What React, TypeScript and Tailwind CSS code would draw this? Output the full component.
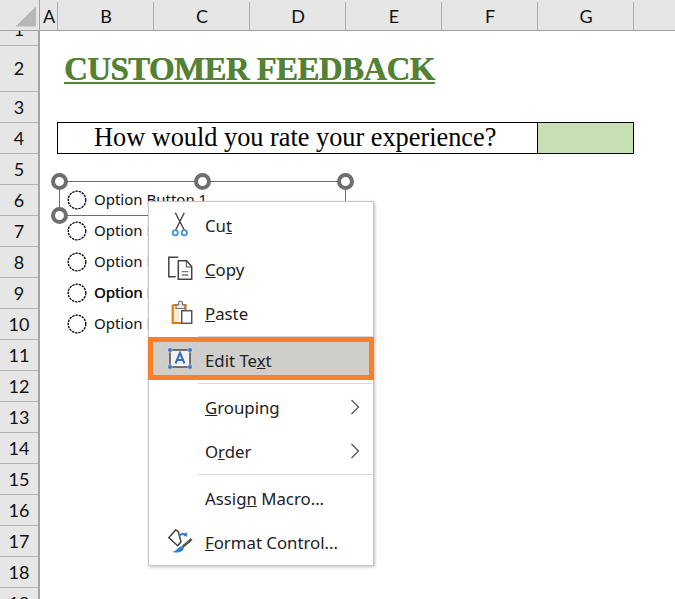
const columns = [
  { label: "A", width: "w-[18px]" },
  { label: "B", width: "w-[96px]" },
  { label: "C", width: "w-[96px]" },
  { label: "D", width: "w-[96px]" },
  { label: "E", width: "w-[96px]" },
  { label: "F", width: "w-[96px]" },
  { label: "G", width: "w-[96px]" },
];

const rows = [
  { label: "2", height: "h-[46px]" },
  { label: "3", height: "h-[31px]" },
  { label: "4", height: "h-[31px]" },
  { label: "5", height: "h-[31px]" },
  { label: "6", height: "h-[31px]" },
  { label: "7", height: "h-[31px]" },
  { label: "8", height: "h-[31px]" },
  { label: "9", height: "h-[31px]" },
  { label: "10", height: "h-[31px]" },
  { label: "11", height: "h-[31px]" },
  { label: "12", height: "h-[31px]" },
  { label: "13", height: "h-[31px]" },
  { label: "14", height: "h-[31px]" },
  { label: "15", height: "h-[31px]" },
  { label: "16", height: "h-[31px]" },
  { label: "17", height: "h-[31px]" },
  { label: "18", height: "h-[31px]" },
  { label: "19", height: "h-[31px]" },
];

const options = [
  { label: "Option Button 1", bold: false },
  { label: "Option Button 2", bold: false },
  { label: "Option Button 3", bold: false },
  { label: "Option Button 4", bold: true },
  { label: "Option Button 5", bold: false },
];

const RadioCircle = () => (
  <svg width="20" height="20" viewBox="0 0 20 20" className="shrink-0">
    <circle cx="10" cy="10" r="8.8" fill="white" stroke="#000" strokeWidth="1.3" strokeDasharray="2.4 0.9" />
  </svg>
);

const Handle = ({ className }: { className: string }) => (
  <div className={`absolute w-[17px] h-[17px] rounded-full bg-white border-[4px] border-[#6e6e6e] ${className}`} />
);

const CutIcon = () => (
  <svg width="32" height="32" viewBox="0 0 32 32" fill="none">
    <path d="M7.3 0.7 L16.3 18 M16.3 0.7 L7.7 18" stroke="#444" strokeWidth="1.4" />
    <circle cx="7.3" cy="20.7" r="2.6" stroke="#3f97dc" strokeWidth="1.8" />
    <circle cx="16.3" cy="20.7" r="2.6" stroke="#3f97dc" strokeWidth="1.8" />
  </svg>
);

const CopyIcon = () => (
  <svg width="32" height="32" viewBox="0 0 32 32" fill="none">
    <path d="M10.3 1.2 H0.8 V20.7 H7.7" stroke="#444" strokeWidth="1.5" />
    <path d="M10.3 4.7 H18.7 L23.7 10.7 V23.3 H10.3 Z" fill="white" stroke="#444" strokeWidth="1.5" />
    <path d="M18.3 5 V11 H23.5" stroke="#444" strokeWidth="1" />
    <path d="M13.7 15.7 H20.3 M13.7 19 H20.3" stroke="#777" strokeWidth="1.3" />
  </svg>
);

const PasteIcon = () => (
  <svg width="32" height="32" viewBox="0 0 32 32" fill="none">
    <path d="M4.7 5 H17.5 V10 M4.7 5 V23 H13" stroke="#e07b12" strokeWidth="2.2" />
    <path d="M6 6.5 H16 V9 H11 V21.5 H6 Z" fill="#fbe9d3" />
    <path d="M8 8.5 V5 H10.5 V2.7 C10.5 0.5 14.5 0.5 14.5 2.7 V5 H17 V8.5 Z" fill="#e8e8e8" stroke="#777" strokeWidth="1.2" />
    <rect x="13.7" y="10.7" width="10" height="12.6" fill="white" stroke="#555" strokeWidth="1.5" />
  </svg>
);

const EditTextIcon = () => (
  <svg width="32" height="32" viewBox="0 0 32 32" fill="none">
    <rect x="6" y="6" width="20" height="17" fill="#f2f2f2" stroke="#333" strokeWidth="1.3" />
    <path d="M11.5 19.5 L16 8.8 L20.5 19.5 M13 16 H19" stroke="#2f6fc4" strokeWidth="2" />
    <g fill="#2f6fc4" stroke="#cfe2f7" strokeWidth="0.6">
      <rect x="4" y="4" width="4" height="4" />
      <rect x="24" y="4" width="4" height="4" />
      <rect x="4" y="21" width="4" height="4" />
      <rect x="24" y="21" width="4" height="4" />
    </g>
  </svg>
);

const FormatIcon = () => (
  <svg width="32" height="32" viewBox="0 0 32 32" fill="none">
    <path d="M0.8 8.7 L7.7 0.9 L10.3 2.7 L13 12.7 L9.7 16.7 Z" fill="white" stroke="#444" strokeWidth="1.5" />
    <path d="M11.5 7 C13.5 4 16 4 17.5 7" stroke="#2f7fd0" strokeWidth="1.8" />
    <path d="M15 5 L19 3.5 L19 8 Z" fill="#2f7fd0" />
    <path d="M23.7 10 L14.5 18" stroke="#555" strokeWidth="2.6" />
    <path d="M4.3 22.7 C8.5 22.5 9 18.5 13.5 17.2 L15.8 19.6 C15 23 9 24.8 4.3 22.7 Z" fill="#2f7fd0" />
  </svg>
);

const Chevron = () => (
  <svg width="10" height="16" viewBox="0 0 10 16" fill="none" className="mr-[13px] -mt-[2px]">
    <path d="M1.5 1 L8.5 8 L1.5 15" stroke="#555" strokeWidth="1.3" />
  </svg>
);

const MenuItem = ({
  icon,
  children,
  arrow,
}: {
  icon?: React.ReactNode;
  children: React.ReactNode;
  arrow?: boolean;
}) => (
  <div className="flex items-center h-[44px] text-[#222]">
    <div className="w-[19px] shrink-0" />
    <div className="w-[32px] h-[32px] shrink-0 translate-y-[2px]">{icon}</div>
    <div className="ml-[5px] flex-1">{children}</div>
    {arrow && <Chevron />}
  </div>
);

const Separator = () => <div className="ml-[49px] h-px bg-[#d9d9d9]" />;

export default function App() {
  return (
    <div className="w-[675px] h-[599px] overflow-hidden bg-white flex flex-col font-['Lato',sans-serif] text-[#111]">
      {/* column headers */}
      <div className="flex h-[31px] shrink-0 bg-[#e6e6e6] border-b border-[#a3a3a3]">
        <div className="w-[40px] shrink-0 border-r border-[#a3a3a3] pt-[6px] pl-[15px]">
          <svg width="22" height="21" viewBox="0 0 22 21">
            <path d="M21 0.5 V20.5 H0.5 Z" fill="#b7b7b7" />
          </svg>
        </div>
        {columns.map((c) => (
          <div key={c.label} className={`${c.width} shrink-0 mt-[2px] pl-px flex items-center justify-center border-r border-[#adadad] text-[18px]`}>
            {c.label}
          </div>
        ))}
      </div>

      <div className="flex flex-1 min-h-0">
        {/* row headers */}
        <div className="w-[40px] shrink-0 bg-[#e6e6e6] border-r-2 border-[#a3a3a3] text-[18px]">
          <div className="h-[15px] overflow-hidden border-b border-[#b3b3b3]">
            <div className="h-[31px] -mt-[17px] flex items-center justify-center">1</div>
          </div>
          {rows.map((r) => (
            <div key={r.label} className={`${r.height} flex items-center justify-center border-b border-[#b3b3b3]`}>
              {r.label}
            </div>
          ))}
        </div>

        {/* sheet */}
        <div className="relative flex-1 min-w-0">
          <div className="h-[61px] pl-[24px] pb-px flex items-end">
            <span className="font-['Liberation_Serif',serif] font-bold text-[33px] tracking-[-0.65px] leading-[43px] text-[#548235] underline decoration-[2px] underline-offset-[2px] whitespace-nowrap [text-shadow:0.3px_0_0_#548235]">
              CUSTOMER FEEDBACK
            </span>
          </div>

          <div className="mt-[30px] ml-[17px] w-[577px] h-[32px] flex border border-black font-['Liberation_Serif',serif] text-[26.3px] text-black">
            <div className="w-[480px] border-r border-black pl-[36px] flex items-center whitespace-nowrap">
              How would you rate your experience?
            </div>
            <div className="flex-1 bg-[#c6e0b4]" />
          </div>

          <div className="mt-[30px] flex flex-col">
            {options.map((o) => (
              <div key={o.label} className="h-[31px] pl-[27px] flex items-center gap-[7px] font-['Noto_Sans',sans-serif] text-[15px] whitespace-nowrap">
                <RadioCircle />
                <span className={o.bold ? "[text-shadow:0.2px_0_0_#111]" : ""}>{o.label}</span>
              </div>
            ))}
          </div>

          {/* selected control frame */}
          <div className="absolute left-[19px] top-[150px] w-[287px] h-[35px] border border-[#6e6e6e]" />
          <Handle className="left-[11px] top-[142px]" />
          <Handle className="left-[154px] top-[142px]" />
          <Handle className="left-[297px] top-[142px]" />
          <Handle className="left-[11px] top-[176px]" />

          {/* context menu */}
          <div className="absolute left-[108px] top-[170px] w-[226px] h-[365px] bg-white border border-[#c8c8c8] shadow-[1px_1px_3px_rgba(0,0,0,0.25)] font-['Noto_Sans',sans-serif] text-[16.8px]">
            <div className="pt-[2px]">
              <MenuItem icon={<CutIcon />}>
                Cu<u>t</u>
              </MenuItem>
              <MenuItem icon={<CopyIcon />}>
                <u>C</u>opy
              </MenuItem>
              <MenuItem icon={<PasteIcon />}>
                <u>P</u>aste
              </MenuItem>
              <Separator />
              <div className="-mx-px border-[5px] border-[#f8802b] bg-[#d0cecb] h-[43px] flex items-center text-[#222]">
                <div className="w-[11px] shrink-0" />
                <div className="w-[32px] h-[32px] shrink-0 translate-y-[1px]"><EditTextIcon /></div>
                <div className="ml-[9px] translate-y-[2px]">
                  Edit Te<u>x</u>t
                </div>
              </div>
              <div className="h-[3px]" />
              <Separator />
              <div className="h-[2px]" />
              <MenuItem arrow>
                <u>G</u>rouping
              </MenuItem>
              <MenuItem arrow>
                O<u>r</u>der
              </MenuItem>
              <Separator />
              <div className="h-[2px]" />
              <MenuItem>
                Assig<u>n</u> Macro...
              </MenuItem>
              <MenuItem icon={<FormatIcon />}>
                <u>F</u>ormat Control...
              </MenuItem>
            </div>
          </div>
        </div>
      </div>
    </div>
  );
}
